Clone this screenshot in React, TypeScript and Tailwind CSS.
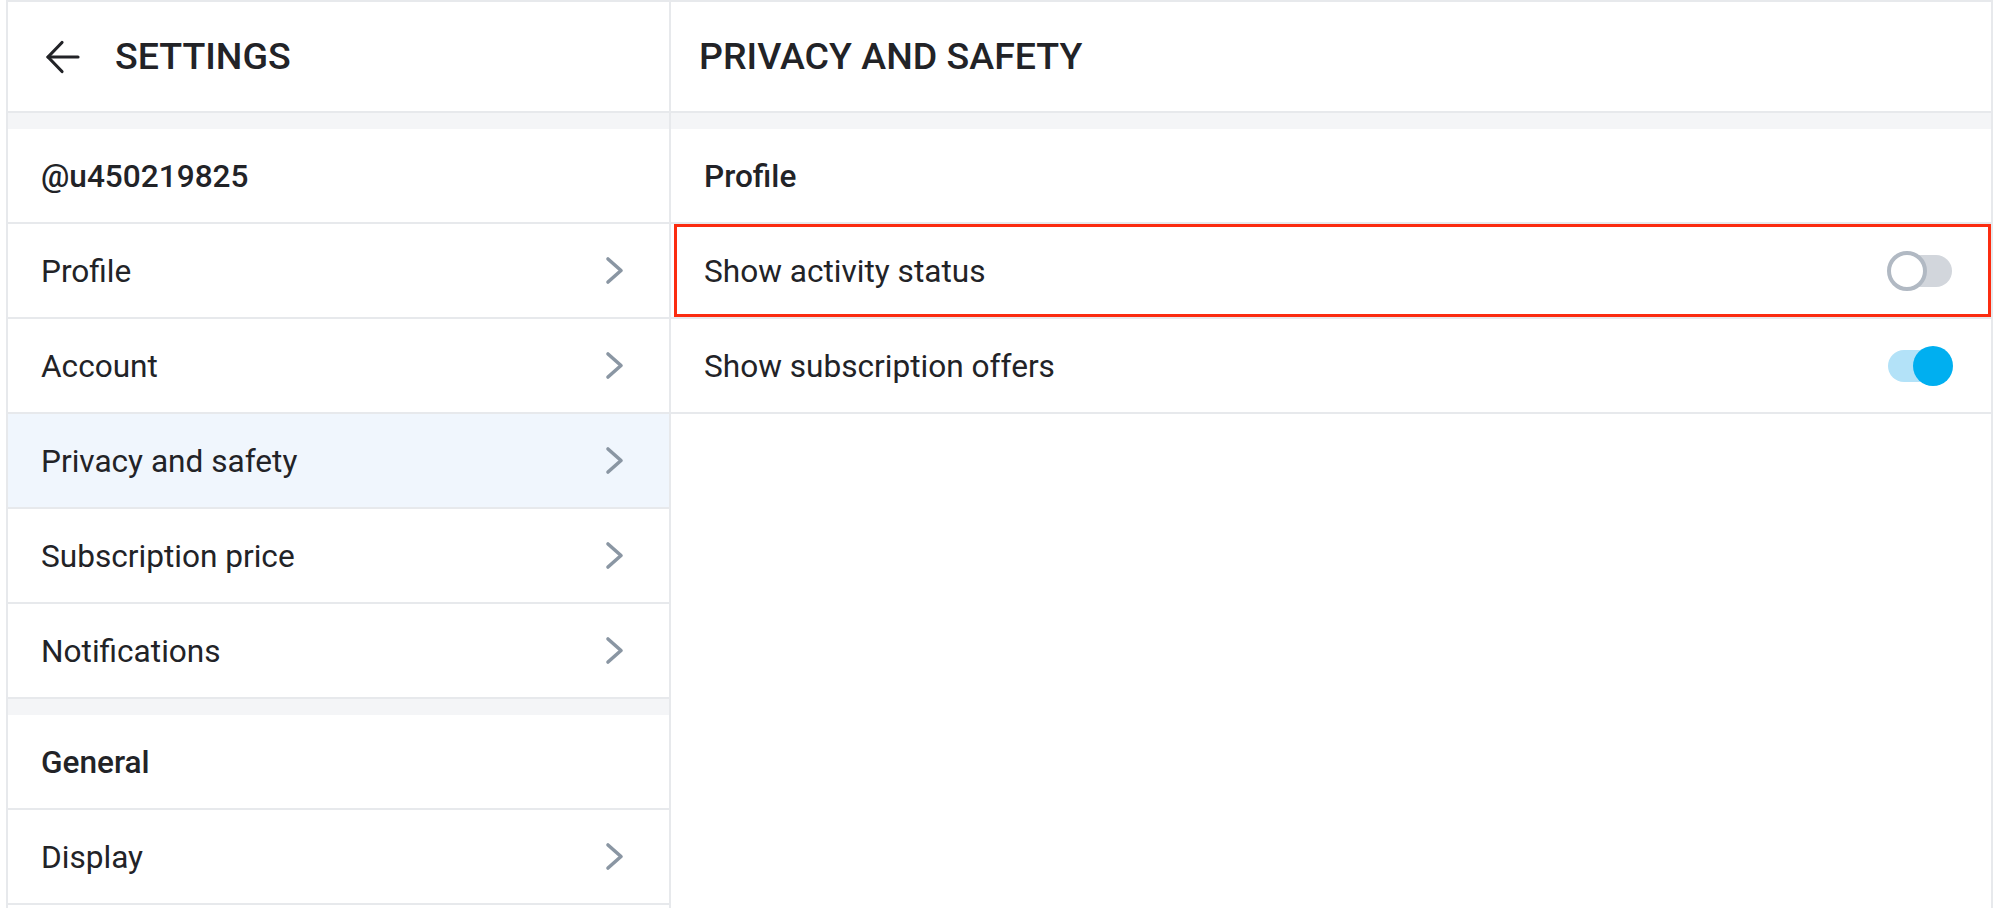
import type { ReactNode } from 'react';

const font = { fontFamily: 'Roboto, "Liberation Sans", sans-serif' };

function BackArrow() {
  return (
    <svg width="36" height="36" viewBox="0 0 36 36" fill="none" stroke="#222327" strokeWidth="3.2" strokeLinecap="round" strokeLinejoin="round">
      <path d="M4 18H34" />
      <path d="M18 3.5 4 18l14 14.5" />
    </svg>
  );
}

function Chevron() {
  return (
    <svg width="21" height="31" viewBox="0 0 21 31" fill="none" stroke="#8a96a3" strokeWidth="3.6" strokeLinecap="round" strokeLinejoin="round">
      <path d="M4 4 17 15.5 4 27" />
    </svg>
  );
}

function Toggle({ on }: { on: boolean }) {
  return (
    <div className="relative h-10 w-[66px] shrink-0">
      <div className={`absolute top-1 bottom-1 left-px right-px rounded-full ${on ? 'bg-[#b3e2f8]' : 'bg-[#d2d6dc]'}`} />
      {on ? (
        <div className="absolute top-0 right-0 h-10 w-10 rounded-full bg-[#00aff0]" />
      ) : (
        <div className="absolute top-0 left-0 h-10 w-10 rounded-full border-4 border-[#b1b9c3] bg-white" />
      )}
    </div>
  );
}

function Header({ children }: { children: ReactNode }) {
  return (
    <div className="flex h-[111px] shrink-0 items-center border-b-2 border-[#e7e9ec] text-[37.5px] font-medium text-[#222327]">
      {children}
    </div>
  );
}

function Band() {
  return <div className="h-4 shrink-0 bg-[#f4f5f7]" />;
}

function Row({ children, active, bold }: { children: ReactNode; active?: boolean; bold?: boolean }) {
  return (
    <div
      className={`flex h-[95px] shrink-0 items-center justify-between border-b-2 border-[#e7e9ec] pt-[3px] pl-[33px] text-[31.6px] text-[#222327] ${
        active ? 'bg-[#f0f6fd]' : 'bg-white'
      } ${bold ? 'font-medium' : ''}`}
    >
      {children}
    </div>
  );
}

function NavRow({ label, active }: { label: string; active?: boolean }) {
  return (
    <Row active={active}>
      <span>{label}</span>
      <span className="mr-[44px] -mt-[3px] flex">
        <Chevron />
      </span>
    </Row>
  );
}

export default function App() {
  return (
    <div className="h-[908px] w-[1999px] overflow-hidden bg-white" style={font}>
      <div className="ml-[6px] flex h-[908px] w-[1987px] border-x-2 border-t-2 border-[#e7e9ec]">
        <div className="flex w-[663px] shrink-0 flex-col border-r-2 border-[#e7e9ec]">
          <Header>
            <span className="ml-[36px] mr-[35px] flex">
              <BackArrow />
            </span>
            <span>SETTINGS</span>
          </Header>
          <Band />
          <Row bold>@u450219825</Row>
          <NavRow label="Profile" />
          <NavRow label="Account" />
          <NavRow label="Privacy and safety" active />
          <NavRow label="Subscription price" />
          <NavRow label="Notifications" />
          <Band />
          <Row bold>General</Row>
          <NavRow label="Display" />
        </div>

        <div className="flex flex-1 flex-col">
          <Header>
            <span className="ml-[28px]">PRIVACY AND SAFETY</span>
          </Header>
          <Band />
          <Row bold>Profile</Row>
          <div className="relative">
            <Row>
              <span>Show activity status</span>
              <span className="mr-[38px] -mt-[3px] flex">
                <Toggle on={false} />
              </span>
            </Row>
            <div className="pointer-events-none absolute top-0 bottom-[2px] left-[3px] right-0 border-[3px] border-[#fb2c10]" />
          </div>
          <Row>
            <span>Show subscription offers</span>
            <span className="mr-[38px] -mt-[3px] flex">
              <Toggle on />
            </span>
          </Row>
        </div>
      </div>
    </div>
  );
}
